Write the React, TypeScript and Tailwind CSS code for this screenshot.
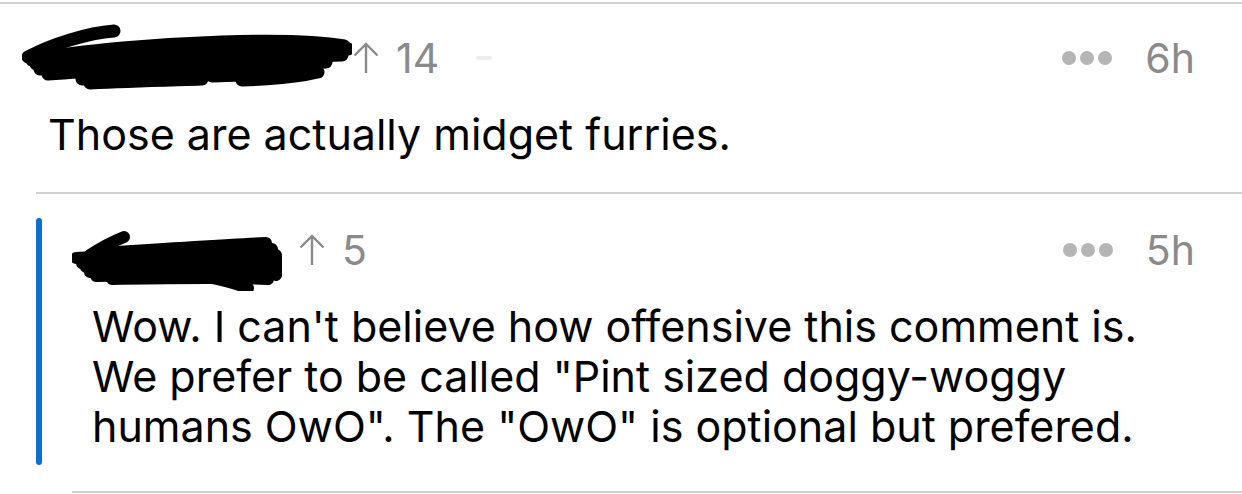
import React from 'react';

const Scribble = ({ width, height, paths, stroke = 12 }: { width: number; height: number; paths: string[]; stroke?: number }) => (
  <svg width={width} height={height} viewBox={`0 0 ${width} ${height}`} className="shrink-0 self-start">
    {paths.map((d, i) => (
      <path key={i} d={d} stroke="#000" strokeWidth={stroke} strokeLinecap="round" strokeLinejoin="round" fill="none" />
    ))}
  </svg>
);

const Dots = () => (
  <div className="flex items-center gap-[4px]">
    <span className="w-[14px] h-[14px] rounded-full bg-[#b5b5b5]" />
    <span className="w-[14px] h-[14px] rounded-full bg-[#b5b5b5]" />
    <span className="w-[14px] h-[14px] rounded-full bg-[#b5b5b5]" />
  </div>
);

const UpArrow = () => (
  <svg width="28" height="32" viewBox="0 0 28 32" className="shrink-0">
    <path d="M14 31 V2 M2.5 13.5 L14 2 L25.5 13.5" stroke="#8a8a8a" strokeWidth={2.4} fill="none" />
  </svg>
);

const scribble1 = [
  'M6 33 C30 20 66 9 92 7',
  'M10 36 C60 26 140 20 200 18 C260 16 300 18 322 22',
  'M14 40 C80 33 180 27 326 25',
  'M18 45 C100 39 200 35 320 31',
  'M26 50 C100 45 200 42 304 38',
  'M40 42 C120 36 200 30 280 28',
  'M60 55 C110 52 160 51 200 50',
  'M68 59 C110 57 150 56 180 55',
  'M190 52 C230 51 260 49 290 44',
  'M220 56 C250 55 275 53 296 48',
];

const scribble2 = [
  'M18 28 C30 20 42 14 52 10',
  'M4 31 C50 28 120 24 200 22',
  'M10 36 C70 34 140 30 204 28',
  'M14 40 C80 38 150 36 206 34',
  'M18 45 C80 43 150 42 206 40',
  'M24 49 C80 48 140 47 204 46',
  'M40 52 C100 51 150 50 196 52',
  'M136 50 C150 53 165 57 176 61',
  'M30 26 C90 22 150 18 194 16',
  'M186 20 L200 30 L192 40 L204 48',
];

export default function App() {
  return (
    <div className="w-[1242px] h-[494px] bg-white overflow-hidden" style={{ fontFamily: 'Inter, "Liberation Sans", sans-serif' }}>
      <div className="h-[2px] mt-[2px] bg-[#d0d0d0]" />
      <div className="pl-[22px] pr-[47px] mt-[22px]">
        <div className="flex items-center h-[64px]">
          <div className="mt-[-2px] self-start">
            <Scribble width={330} height={66} paths={scribble1} stroke={13} />
          </div>
          <div className="flex items-center gap-[16px]">
            <UpArrow />
            <span className="text-[41px] text-[#8a8a8a] leading-none">14</span>
            <span className="ml-[21px] w-[16px] h-[4px] rounded-full bg-[#eceef3]" />
          </div>
          <div className="ml-auto flex items-center gap-[33px]">
            <Dots />
            <span className="text-[41px] text-[#8a8a8a] leading-none">6h</span>
          </div>
        </div>
        <p className="pl-[26px] mt-[19px] text-[43px] leading-[50px] text-black">
          Those are actually midget furries.
        </p>
      </div>
      <div className="ml-[36px] mt-[33px] h-[2px] bg-[#d0d0d0]" />
      <div className="ml-[36px] mt-[24px] flex">
        <div className="w-[6px] h-[247px] rounded-full bg-[#0b6fcf] shrink-0" />
        <div className="flex-1 pl-[30px] pr-[47px]">
          <div className="flex items-center h-[64px]">
            <div className="mt-[9px] self-start">
              <Scribble width={210} height={64} paths={scribble2} stroke={12} />
            </div>
            <div className="flex items-center gap-[16px] ml-[16px]">
              <UpArrow />
              <span className="text-[41px] text-[#8a8a8a] leading-none">5</span>
            </div>
            <div className="ml-auto flex items-center gap-[33px]">
              <Dots />
              <span className="text-[41px] text-[#8a8a8a] leading-none">5h</span>
            </div>
          </div>
          <p className="pl-[20px] mt-[19px] text-[43px] leading-[50px] text-black whitespace-nowrap">
            Wow. I can't believe how offensive this comment is.
            <br />
            We prefer to be called "Pint sized doggy-woggy
            <br />
            humans OwO". The "OwO" is optional but prefered.
          </p>
        </div>
      </div>
      <div className="ml-[72px] mt-[26px] h-[2px] bg-[#d0d0d0]" />
    </div>
  );
}
